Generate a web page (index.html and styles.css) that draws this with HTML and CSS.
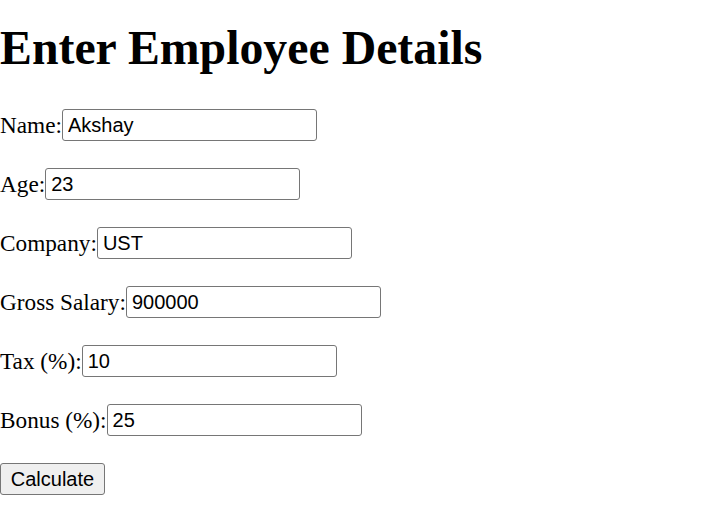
FILE: index.html
```html
<!DOCTYPE html>
<html>
<head>
<meta charset="utf-8">
<link rel="stylesheet" href="styles.css">
</head>
<body>
<h1 class="title">Enter Employee Details</h1>
<form class="form">
  <div class="row"><label class="label">Name:</label><input class="field" type="text" value="Akshay"></div>
  <div class="row"><label class="label">Age:</label><input class="field" type="text" value="23"></div>
  <div class="row"><label class="label">Company:</label><input class="field" type="text" value="UST"></div>
  <div class="row"><label class="label">Gross Salary:</label><input class="field" type="text" value="900000"></div>
  <div class="row"><label class="label">Tax (%):</label><input class="field" type="text" value="10"></div>
  <div class="row"><label class="label">Bonus (%):</label><input class="field" type="text" value="25"></div>
  <div class="row"><button class="btn" type="button">Calculate</button></div>
</form>
</body>
</html>
```
FILE: styles.css
```css
html, body {
  margin: 0;
  padding: 0;
  background: #fff;
}
body {
  font-family: "Liberation Serif", "Times New Roman", serif;
  font-size: 23.25px;
  color: #000;
}
.title {
  font-size: 47.8px;
  font-weight: bold;
  margin: 0;
  padding-top: 21px;
  line-height: 54px;
  height: 54px;
  white-space: nowrap;
}
.form {
  display: flex;
  flex-direction: column;
  gap: 27px;
  margin-top: 34px;
}
.row {
  display: flex;
  align-items: center;
  height: 32px;
}
.label {
  white-space: pre;
  line-height: 26px;
}
.field {
  box-sizing: border-box;
  width: 255px;
  height: 32px;
  margin: 0;
  padding: 1px 5px 0;
  border: 1px solid #767676;
  border-radius: 3px;
  font-family: "Liberation Sans", Arial, sans-serif;
  font-size: 20px;
  color: #000;
  background: #fff;
}
.btn {
  box-sizing: border-box;
  width: 105px;
  height: 32px;
  margin: 0;
  padding: 0 8px;
  border: 1px solid #767676;
  border-radius: 3px;
  background: #efefef;
  font-family: "Liberation Sans", Arial, sans-serif;
  font-size: 20px;
  color: #000;
}
```
